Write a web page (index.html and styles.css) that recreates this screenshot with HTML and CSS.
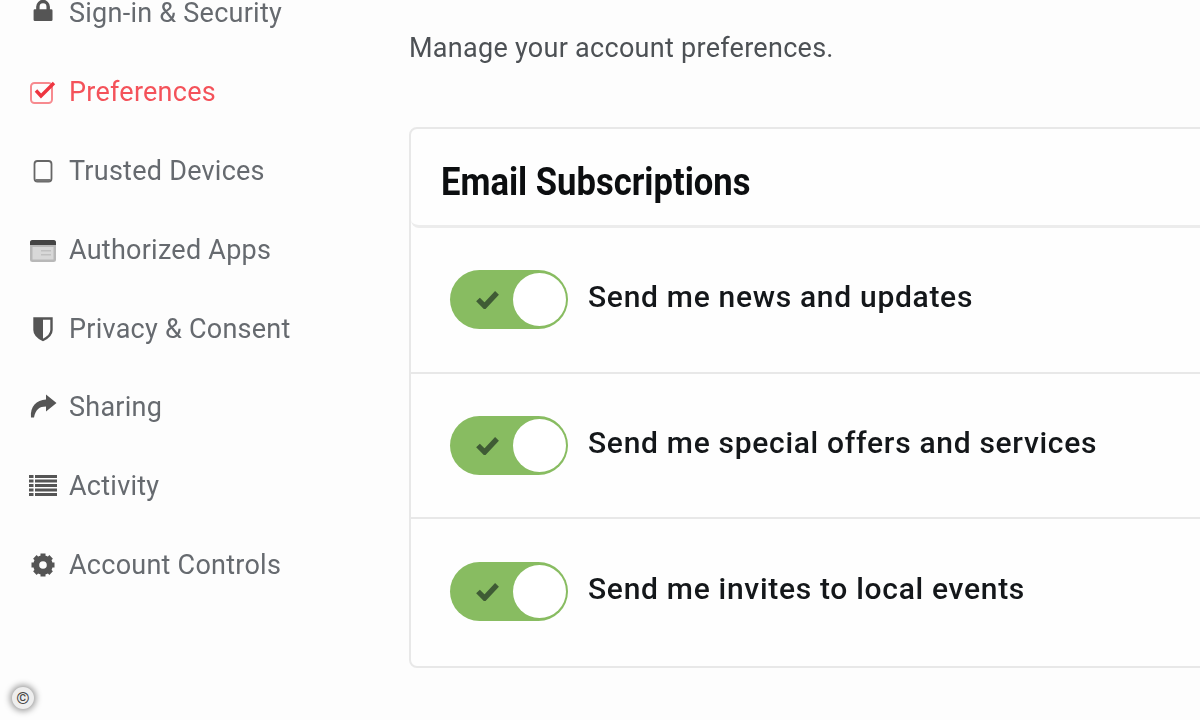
FILE: index.html
```html
<!DOCTYPE html>
<html lang="en">
<head>
    <meta charset="UTF-8">
    <title>Preferences</title>
    <link rel="stylesheet" href="styles.css">
</head>
<body>
    <div class="page">
        <nav class="sidebar">
            <a class="nav-item">
                <svg class="nav-icon" viewBox="0 0 28 28"><path d="M6 12V9a8 8 0 0 1 16 0v3h1.500a1.500 1.500 0 0 1 1.500 1.500V24a1.500 1.500 0 0 1-1.500 1.500h-19A1.500 1.500 0 0 1 3 24V13.500A1.500 1.500 0 0 1 4.500 12zM10 12h8V9a4 4 0 0 0-8 0z" transform="translate(2 0) scale(.86)"/></svg>
                Sign-in &amp; Security
            </a>
            <a class="nav-item active">
                <svg class="nav-icon" viewBox="0 0 28 28"><rect x="2" y="5" width="21" height="20" rx="3.500" fill="none" stroke="#f78a8f" stroke-width="2"/><path d="M7 12.500l5 5.500L25 5" fill="none" stroke="#ee3540" stroke-width="3.400"/></svg>
                Preferences
            </a>
            <a class="nav-item">
                <svg class="nav-icon" viewBox="0 0 28 28"><rect x="5.500" y="4" width="17" height="20.500" rx="3" fill="none" stroke="#666" stroke-width="1.800"/><path d="M7 22h14v2.500H7z" fill="#777"/></svg>
                Trusted Devices
            </a>
            <a class="nav-item">
                <svg class="nav-icon" viewBox="0 0 28 28"><rect x="1" y="4" width="26" height="22" rx="2.500" fill="#b8b8b8"/><path d="M1 6.500A2.500 2.500 0 0 1 3.500 4h21A2.500 2.500 0 0 1 27 6.500V9H1z" fill="#444"/><rect x="3.500" y="11" width="21" height="12.500" fill="#d8d8d8"/><path d="M12 14h10v1.500H12zM12 18h10v1.500H12z" fill="#c0c0c0"/></svg>
                Authorized Apps
            </a>
            <a class="nav-item">
                <svg class="nav-icon" viewBox="0 0 28 28"><path d="M5.500 3.500h17V15c0 4.500-3.500 7.500-8.500 10C9 22.500 5.500 19.500 5.500 15z" fill="none" stroke="#555" stroke-width="2.400"/><path d="M5.500 3.500H14V25C9 22.500 5.500 19.500 5.500 15z"/></svg>
                Privacy &amp; Consent
            </a>
            <a class="nav-item">
                <svg class="nav-icon" viewBox="0 0 28 28"><path d="M17 1.500L27.500 10 17 18.500v-5c-6.500 0-10.500 3-12 11H2C1 13.500 7.500 7 17 6.500z"/></svg>
                Sharing
            </a>
            <a class="nav-item">
                <svg class="nav-icon" viewBox="0 0 28 28"><path d="M0 3h4.500v3H0zM6 3h22v3H6zM0 7.500h4.500v3H0zM6 7.500h22v3H6zM0 12h4.500v3H0zM6 12h22v3H6zM0 16.500h4.500v3H0zM6 16.500h22v3H6zM0 21h4.500v3H0zM6 21h22v3H6z"/></svg>
                Activity
            </a>
            <a class="nav-item">
                <svg class="nav-icon" viewBox="0 0 28 28"><circle cx="14" cy="14" r="6.800" fill="none" stroke="#555" stroke-width="6"/><path d="M11.500 2.500h5v4h-5zM11.500 21.500h5v4h-5zM2.500 11.500h4v5h-4zM21.500 11.500h4v5h-4z"/><path d="M11.500 2.500h5v4h-5zM11.500 21.500h5v4h-5zM2.500 11.500h4v5h-4zM21.500 11.500h4v5h-4z" transform="rotate(45 14 14)"/></svg>
                Account Controls
            </a>
        </nav>
        <main class="content">
            <p class="intro">Manage your account preferences.</p>
            <section class="card">
                <h2 class="card-title"><span class="card-title-text">Email Subscriptions</span></h2>
                <div class="row">
                    <span class="toggle"><svg class="toggle-check" viewBox="0 0 24 20"><path d="M2 10l7 7L22 3" fill="none" stroke="#3f5b35" stroke-width="5.500"/></svg><span class="knob"></span></span>
                    <span class="row-label">Send me news and updates</span>
                </div>
                <div class="row">
                    <span class="toggle"><svg class="toggle-check" viewBox="0 0 24 20"><path d="M2 10l7 7L22 3" fill="none" stroke="#3f5b35" stroke-width="5.500"/></svg><span class="knob"></span></span>
                    <span class="row-label">Send me special offers and services</span>
                </div>
                <div class="row">
                    <span class="toggle"><svg class="toggle-check" viewBox="0 0 24 20"><path d="M2 10l7 7L22 3" fill="none" stroke="#3f5b35" stroke-width="5.500"/></svg><span class="knob"></span></span>
                    <span class="row-label">Send me invites to local events</span>
                </div>
            </section>
        </main>
    </div>
    <span class="copyright">©</span>
</body>
</html>
```
FILE: styles.css
```css
html, body {
    margin: 0;
    height: 720px;
    overflow: hidden;
    background-color: #fdfdfd;
}
body {
    font-family: Roboto, sans-serif;
    color: #1f2328;
}
.page {
    display: flex;
    filter: blur(0.6px);
}
.sidebar {
    width: 409px;
    flex: none;
    margin-top: -26px;
    padding-left: 29px;
    box-sizing: border-box;
}
.nav-item {
    display: flex;
    align-items: center;
    gap: 12px;
    height: 78.8px;
    font-size: 27px;
    letter-spacing: 0.25px;
    color: #666a6f;
}
.nav-item.active {
    color: #f4525a;
}
.nav-icon {
    width: 28px;
    height: 28px;
    flex: none;
    fill: #555;
}
.content {
    width: 900px;
    flex: none;
}
.intro {
    margin: 31px 0 61px;
    font-size: 27px;
    letter-spacing: 0.28px;
    line-height: 35px;
    color: #4d5155;
}
.card {
    width: 900px;
    height: 541px;
    border: 2px solid #e8e8e8;
    border-radius: 8px;
    box-sizing: border-box;
    background-color: #fefefe;
}
.card-title {
    margin: 0;
    height: 99px;
    padding: 9px 0 0 30px;
    display: flex;
    align-items: center;
    font-size: 38px;
    font-weight: 700;
    color: #0c0e10;
    border-bottom: 3px solid #ececec;
    border-radius: 0 0 8px 8px;
    box-sizing: border-box;
}
.card-title-text {
    transform: scaleX(0.91);
    transform-origin: left center;
}
.row {
    height: 145.5px;
    display: flex;
    align-items: center;
    gap: 20px;
    padding-left: 39px;
    font-size: 30px;
    letter-spacing: 0.7px;
    border-bottom: 2px solid #e8e8e8;
    box-sizing: border-box;
}
.row:last-child {
    border-bottom: none;
}
.row-label {
    margin-bottom: 6px;
    font-weight: 500;
    color: #14171a;
}
.toggle {
    position: relative;
    width: 118px;
    height: 59px;
    flex: none;
    border-radius: 30px;
    background-color: #88bc61;
}
.toggle-check {
    position: absolute;
    left: 26px;
    top: 20px;
    width: 23px;
    height: 19px;
}
.knob {
    position: absolute;
    right: 2px;
    top: 3px;
    width: 53px;
    height: 53px;
    border-radius: 50%;
    background-color: #fff;
}
.copyright {
    position: absolute;
    left: 12px;
    top: 687px;
    width: 22px;
    height: 22px;
    font-size: 17px;
    line-height: 22px;
    text-align: center;
    color: #444;
    border-radius: 50%;
    background-color: #eee;
    box-shadow: 0 0 6px 2px #999;
}
```
